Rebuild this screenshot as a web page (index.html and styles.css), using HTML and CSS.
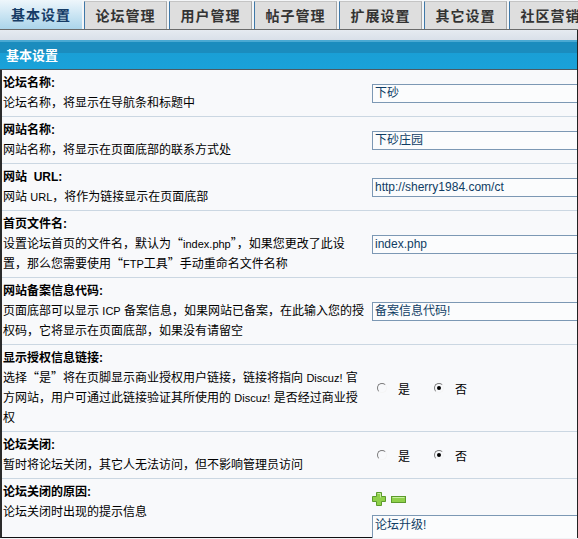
FILE: index.html
```html
<!DOCTYPE html>
<html lang="zh-CN">
<head>
<meta charset="utf-8">
<title>基本设置</title>
<link rel="stylesheet" href="styles.css">
</head>
<body>
<div class="frame">
  <div class="tabs">
    <div class="tab active">基本设置</div>
    <div class="tab">论坛管理</div>
    <div class="tab">用户管理</div>
    <div class="tab">帖子管理</div>
    <div class="tab">扩展设置</div>
    <div class="tab">其它设置</div>
    <div class="tab">社区营销</div>
  </div>
  <div class="main">
    <div class="strip"></div>
    <div class="head">基本设置</div>
    <div class="rows">
      <div class="row">
        <div class="label"><div class="title">论坛名称:</div><div class="desc">论坛名称，将显示在导航条和标题中</div></div>
        <div class="field"><div class="input">下砂</div></div>
      </div>
      <div class="row">
        <div class="label"><div class="title">网站名称:</div><div class="desc">网站名称，将显示在页面底部的联系方式处</div></div>
        <div class="field"><div class="input">下砂庄园</div></div>
      </div>
      <div class="row">
        <div class="label"><div class="title">网站 &nbsp;URL:</div><div class="desc">网站 <span class="en">URL</span>，将作为链接显示在页面底部</div></div>
        <div class="field"><div class="input">http://sherry1984.com/ct</div></div>
      </div>
      <div class="row">
        <div class="label"><div class="title">首页文件名:</div><div class="desc">设置论坛首页的文件名，默认为<span class="q">“</span><span class="en">index.php</span><span class="q">”</span>，如果您更改了此设<br>置，那么您需要使用<span class="q">“</span><span class="en">FTP</span>工具<span class="q">”</span>手动重命名文件名称</div></div>
        <div class="field"><div class="input">index.php</div></div>
      </div>
      <div class="row">
        <div class="label"><div class="title">网站备案信息代码:</div><div class="desc">页面底部可以显示 <span class="en">ICP</span> 备案信息，如果网站已备案，在此输入您的授<br>权码，它将显示在页面底部，如果没有请留空</div></div>
        <div class="field"><div class="input">备案信息代码!</div></div>
      </div>
      <div class="row">
        <div class="label"><div class="title">显示授权信息链接:</div><div class="desc">选择<span class="q">“</span>是<span class="q">”</span>将在页脚显示商业授权用户链接，链接将指向 <span class="en">Discuz!</span> 官<br>方网站，用户可通过此链接验证其所使用的 <span class="en">Discuz!</span> 是否经过商业授<br>权</div></div>
        <div class="field"><div class="radios"><span class="radio"><span class="rb"></span>是</span><span class="radio"><span class="rb on"></span>否</span></div></div>
      </div>
      <div class="row">
        <div class="label"><div class="title">论坛关闭:</div><div class="desc">暂时将论坛关闭，其它人无法访问，但不影响管理员访问</div></div>
        <div class="field"><div class="radios"><span class="radio"><span class="rb"></span>是</span><span class="radio"><span class="rb on"></span>否</span></div></div>
      </div>
      <div class="row last">
        <div class="label"><div class="title">论坛关闭的原因:</div><div class="desc">论坛关闭时出现的提示信息</div></div>
        <div class="field top">
          <div class="pm">
            <svg width="14" height="14" viewBox="0 0 14 14"><path d="M4.5 0.5h5v4h4v5h-4v4h-5v-4h-4v-5h4z" fill="#8fd04a" stroke="#5c9a2c" stroke-width="1"/><path d="M5.5 1.5h3v4" fill="none" stroke="#c8f0a0" stroke-width="1"/></svg>
            <svg width="15" height="7" viewBox="0 0 15 7"><rect x="0.5" y="0.5" width="14" height="6" fill="#8fd04a" stroke="#5c9a2c" stroke-width="1"/><path d="M1.5 1.5h12" stroke="#c8f0a0" stroke-width="1"/></svg>
          </div>
          <div class="textarea">论坛升级!</div>
        </div>
      </div>
    </div>
  </div>
</div>
</body>
</html>
```
FILE: styles.css
```css
html, body {
  margin: 0;
  padding: 0;
  overflow: hidden;
  background: #ffffff;
}
.frame {
  width: 578px;
  height: 539px;
  overflow: hidden;
  font-family: "Liberation Sans", "Noto Sans CJK SC", sans-serif;
  font-size: 12px;
  color: #000;
  background: #f1f3f6;
}
.tabs {
  display: flex;
  height: 28px;
  padding-top: 1px;
  border-bottom: 1px solid #6b6b6b;
  background: #f4f6f8;
  white-space: nowrap;
  overflow: hidden;
}
.tab {
  flex: 0 0 auto;
  box-sizing: border-box;
  width: 83px;
  height: 28px;
  margin-left: 2px;
  background: #dedede;
  border-top: 1px solid #c4c4c4;
  border-left: 1px solid #3f78a8;
  border-right: 1px solid #a8a8a8;
  font-family: "Noto Sans CJK SC", sans-serif;
  font-weight: bold;
  font-size: 14px;
  letter-spacing: 1px;
  color: #333;
  line-height: 26px;
  text-align: center;
}
.tab.active {
  width: 82px;
  margin-left: 0;
  height: 30px;
  margin-top: -1px;
  border: none;
  background: linear-gradient(#eef6fb, #c7e3f2 55%, #a9d3ea);
  color: #163c66;
  line-height: 29px;
  position: relative;
  z-index: 1;
}
.main {
  border-right: 1px solid #222;
  overflow: hidden;
}
.strip {
  height: 10px;
  background: linear-gradient(#e6ebf1, #d9e0e9);
}
.head {
  height: 30px;
  box-sizing: border-box;
  border-bottom: 1px solid #4d5a62;
  background: linear-gradient(#4aa9d3 0, #4aa9d3 2px, #1b8cbe 2px, #1b8cbe 13px, #1a9fd6 13px, #1aa2d9 100%);
  color: #fff;
  font-family: "Noto Sans CJK SC", sans-serif;
  font-weight: bold;
  font-size: 13px;
  line-height: 28px;
  padding-left: 6px;
  padding-top: 1px;
}
.rows {
  border-left: 2px solid #2b2b2b;
  border-bottom: 1px solid #111;
  background: #f8f9fb;
  height: 467px;
}
.row {
  display: grid;
  grid-template-columns: 366px 1fr;
  border-bottom: 1px solid #cbd7e2;
}
.row.last {
  border-bottom: none;
}
.label {
  padding: 3px 2px 3px 1px;
  line-height: 20px;
  white-space: nowrap;
}
.title {
  font-weight: bold;
}
.en {
  font-size: 11px;
  line-height: 1;
}
.q {
  font-family: "Noto Sans CJK SC", sans-serif;
  line-height: 1;
}
.field {
  display: flex;
  align-items: center;
  padding-left: 4px;
  min-width: 0;
}
.field.top {
  flex-direction: column;
  align-items: flex-start;
  padding-top: 13px;
}
.input {
  flex: 0 0 auto;
  box-sizing: border-box;
  width: 260px;
  height: 19px;
  border: 1px solid #7c98b4;
  background: #fbfcfd;
  color: #0f3c64;
  line-height: 17px;
  padding-left: 2px;
  white-space: nowrap;
}
.radios {
  display: flex;
  align-items: center;
  padding-left: 5px;
}
.radio {
  display: inline-flex;
  align-items: center;
  margin-right: 24px;
}
.rb {
  box-sizing: border-box;
  width: 10px;
  height: 10px;
  border-radius: 50%;
  border: 1px solid;
  border-color: #7a7a7a #f4f4f4 #f4f4f4 #7a7a7a;
  margin-right: 11px;
  position: relative;
}
.rb.on::after {
  content: "";
  position: absolute;
  left: 2px;
  top: 2px;
  width: 4px;
  height: 4px;
  border-radius: 50%;
  background: #000;
}
.pm {
  display: flex;
  align-items: center;
  gap: 5px;
  height: 14px;
  margin-bottom: 9px;
}
.textarea {
  flex: 0 0 auto;
  box-sizing: border-box;
  width: 260px;
  height: 40px;
  border: 1px solid #7c98b4;
  background: #fbfcfd;
  color: #0f3c64;
  padding: 1px 2px;
  line-height: 17px;
}
```
